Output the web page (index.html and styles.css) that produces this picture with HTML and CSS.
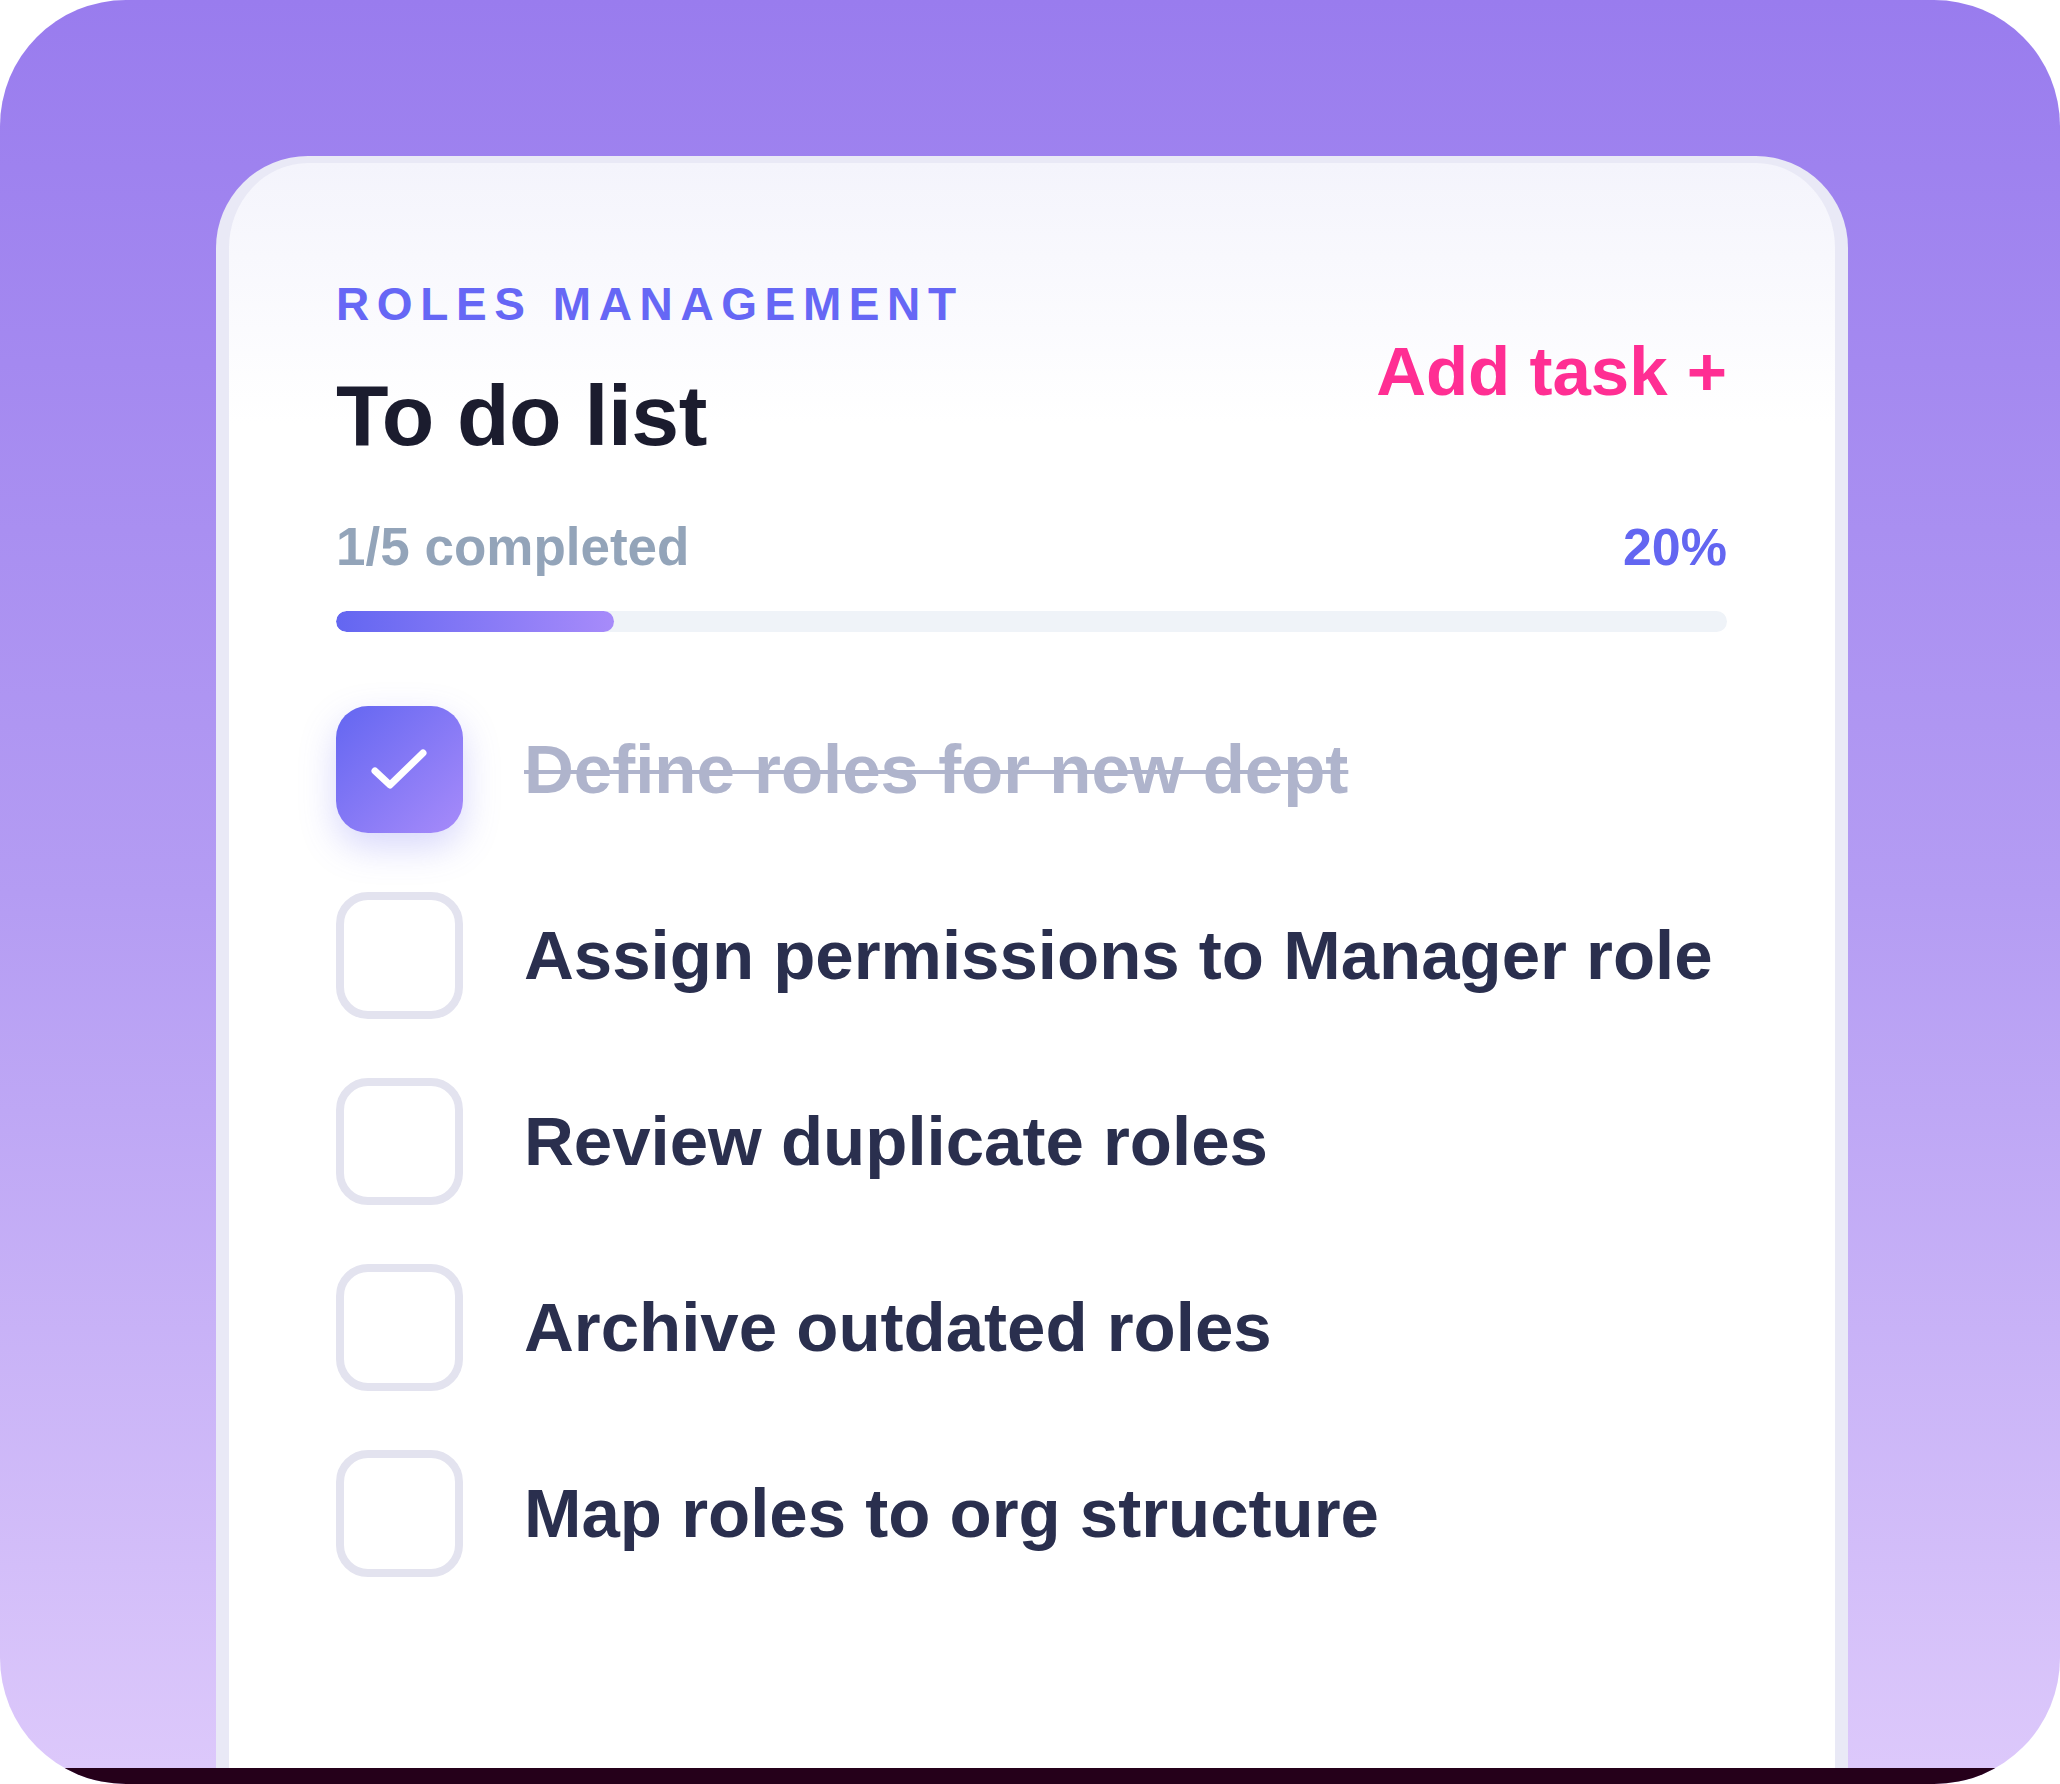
FILE: index.html
```html
<!DOCTYPE html>
<html lang="en">
<head>
    <meta charset="UTF-8">
    <meta name="viewport" content="width=device-width, initial-scale=1.0">
    <title>To do list</title>
    <link rel="stylesheet" href="styles.css">
</head>
<body>

    <div class="frame">
        <div class="card">
            <div class="header">
                <div>
                    <div class="eyebrow">ROLES MANAGEMENT</div>
                    <h1 class="title">To do list</h1>
                </div>
                <a class="add-task" href="#">Add task +</a>
            </div>

            <div class="progress-info">
                <span class="progress-count">1/5 completed</span>
                <span class="progress-pct">20%</span>
            </div>
            <div class="progress-track">
                <div class="progress-fill" style="width: 20%"></div>
            </div>

            <ul class="tasks">
                <li class="task done">
                    <span class="box checked">
                        <svg width="127" height="127" viewBox="0 0 127 127">
                            <path d="M39 65 L54 79 L87 47" fill="none" stroke="#fff" stroke-width="7" stroke-linecap="round" stroke-linejoin="round"/>
                        </svg>
                    </span>
                    <span class="task-text">Define roles for new dept</span>
                </li>
                <li class="task">
                    <span class="box"></span>
                    <span class="task-text">Assign permissions to Manager role</span>
                </li>
                <li class="task">
                    <span class="box"></span>
                    <span class="task-text">Review duplicate roles</span>
                </li>
                <li class="task">
                    <span class="box"></span>
                    <span class="task-text">Archive outdated roles</span>
                </li>
                <li class="task">
                    <span class="box"></span>
                    <span class="task-text">Map roles to org structure</span>
                </li>
            </ul>
        </div>
        <div class="bottom-strip"></div>
    </div>

</body>
</html>
```

FILE: styles.css
```css
body {
    margin: 0;
    background: #ffffff;
    font-family: 'Liberation Sans', Arial, sans-serif;
}
.frame {
    height: 100vh;
    border-radius: 126px;
    overflow: hidden;
    display: flex;
    flex-direction: column;
    padding-top: 156px;
    box-sizing: border-box;
    background: linear-gradient(180deg, #997cee 0%, #b49cf3 50%, #ddc9fb 100%);
}
.card {
    flex: 1;
    margin: 0 212px 0 216px;
    padding: 118px 108px 0 107px;
    border: 13px solid #e9e9f6;
    border-top-width: 7px;
    border-bottom: 0;
    border-radius: 92px 92px 0 0;
    background: linear-gradient(180deg, #f4f4fc 0, #ffffff 260px);
}
.bottom-strip {
    height: 16px;
    flex-shrink: 0;
    background: #25001a;
}
.header {
    display: flex;
    justify-content: space-between;
    align-items: flex-start;
}
.eyebrow {
    font-size: 46px;
    line-height: 1;
    font-weight: bold;
    letter-spacing: 7.6px;
    color: #6667f5;
}
.title {
    margin: 45px 0 0;
    font-size: 86px;
    line-height: 1;
    font-weight: bold;
    letter-spacing: -0.5px;
    color: #1b1c2e;
}
.add-task {
    margin-top: 56px;
    font-size: 69px;
    line-height: 1;
    font-weight: bold;
    color: #ff2e93;
    text-decoration: none;
}
.progress-info {
    display: flex;
    justify-content: space-between;
    align-items: baseline;
    margin-top: 62px;
    font-weight: bold;
    line-height: 1;
}
.progress-count {
    font-size: 53px;
    color: #93a4b9;
}
.progress-pct {
    font-size: 52px;
    color: #6366f1;
}
.progress-track {
    margin-top: 38px;
    height: 21px;
    border-radius: 11px;
    background: #eff3f8;
    overflow: hidden;
}
.progress-fill {
    height: 100%;
    border-radius: 11px;
    background: linear-gradient(90deg, #6366f1, #a78bfa);
}
.tasks {
    list-style: none;
    margin: 74px 0 0;
    padding: 0;
    display: flex;
    flex-direction: column;
    gap: 59px;
}
.task {
    display: flex;
    align-items: center;
    gap: 61px;
}
.box {
    width: 127px;
    height: 127px;
    box-sizing: border-box;
    border: 8px solid #e3e3ef;
    border-radius: 32px;
    background: #ffffff;
    flex-shrink: 0;
}
.box.checked {
    border: 0;
    background: linear-gradient(135deg, #6366f1, #a78bfa);
    box-shadow: 0 14px 36px rgba(99, 102, 241, 0.26);
}
.box svg {
    display: block;
}
.task-text {
    font-size: 69px;
    line-height: 1;
    font-weight: bold;
    color: #2a2f4e;
}
.task.done .task-text {
    color: #afb4cc;
    text-decoration: line-through;
    text-decoration-thickness: 4px;
}
```
